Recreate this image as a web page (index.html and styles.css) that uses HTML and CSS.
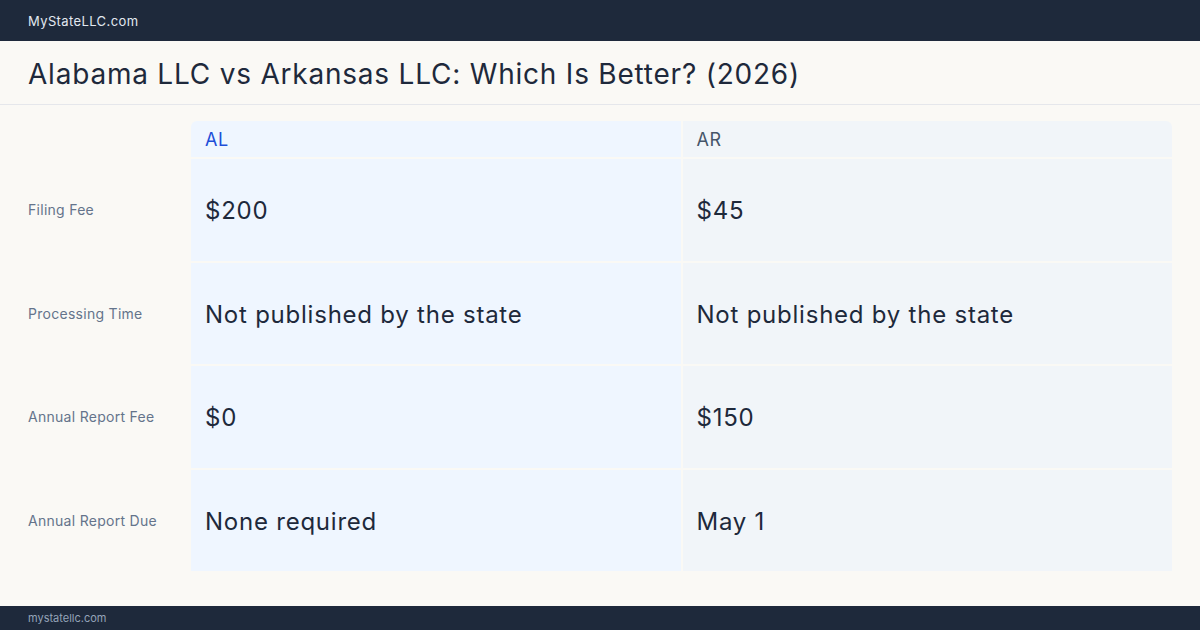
FILE: index.html
```html
<!DOCTYPE html>
<html lang="en">
  <head>
    <meta charset="UTF-8" />
    <meta name="viewport" content="width=device-width, initial-scale=1.0" />
    <title>Alabama LLC vs Arkansas LLC</title>
    <link rel="stylesheet" href="styles.css">
  </head>
  <body>
    <header class="topbar">MyStateLLC.com</header>
    <div class="title-wrap">
      <h1 class="title">Alabama LLC vs Arkansas LLC: Which Is Better? (2026)</h1>
    </div>
    <main class="compare">
      <div class="label"></div>
      <div class="head head-al">AL</div>
      <div class="head head-ar">AR</div>

      <div class="label">Filing Fee</div>
      <div class="cell cell-al">$200</div>
      <div class="cell cell-ar">$45</div>

      <div class="label">Processing Time</div>
      <div class="cell cell-al">Not published by the state</div>
      <div class="cell cell-ar">Not published by the state</div>

      <div class="label">Annual Report Fee</div>
      <div class="cell cell-al">$0</div>
      <div class="cell cell-ar">$150</div>

      <div class="label">Annual Report Due</div>
      <div class="cell cell-al">None required</div>
      <div class="cell cell-ar">May 1</div>
    </main>
    <footer class="footbar">mystatellc.com</footer>
  </body>
</html>
```

FILE: styles.css
```css
html {
  margin: 0;
  padding: 0;
}
body {
  margin: 0;
  width: 1200px;
  height: 630px;
  display: flex;
  flex-direction: column;
  background-color: #faf9f5;
  font-family: Inter, "Liberation Sans", sans-serif;
  color: #1e293b;
}
.topbar {
  height: 41px;
  flex-shrink: 0;
  display: flex;
  align-items: center;
  padding: 0 28px;
  background-color: #1e293b;
  color: #e2e8f0;
  font-size: 13px;
  letter-spacing: 0.03em;
}
.title-wrap {
  height: 64px;
  flex-shrink: 0;
  display: flex;
  align-items: center;
  padding: 3px 28px 0 28px;
  box-sizing: border-box;
  border-bottom: 1px solid #e5e7eb;
}
.title {
  margin: 0;
  font-size: 28px;
  font-weight: 400;
  letter-spacing: 0.028em;
  color: #1e293b;
}
/* table */
.compare {
  margin: 16px 28px 0 28px;
  height: 450px;
  display: grid;
  grid-template-columns: 161px 1fr 1fr;
  grid-template-rows: 36px repeat(4, 1fr);
  column-gap: 2px;
  row-gap: 2px;
}
.label {
  display: flex;
  align-items: center;
  font-size: 14px;
  letter-spacing: 0.02em;
  color: #64748b;
}
.head {
  display: flex;
  align-items: center;
  padding-left: 14px;
  font-size: 18px;
  letter-spacing: 0.03em;
}
.head-al {
  background-color: #eff6ff;
  color: #1d4ed8;
  border-top-left-radius: 6px;
}
.head-ar {
  background-color: #f1f5f9;
  color: #475569;
  border-top-right-radius: 6px;
}
.cell {
  display: flex;
  align-items: center;
  padding-left: 14px;
  padding-top: 2px;
  font-size: 24px;
  letter-spacing: 0.032em;
  color: #1e293b;
}
.cell-al {
  background-color: #eff6ff;
}
.cell-ar {
  background-color: #f1f5f9;
}
.footbar {
  margin-top: auto;
  height: 24px;
  flex-shrink: 0;
  display: flex;
  align-items: center;
  padding: 0 28px;
  background-color: #1e293b;
  color: #94a3b8;
  font-size: 11px;
}
```
